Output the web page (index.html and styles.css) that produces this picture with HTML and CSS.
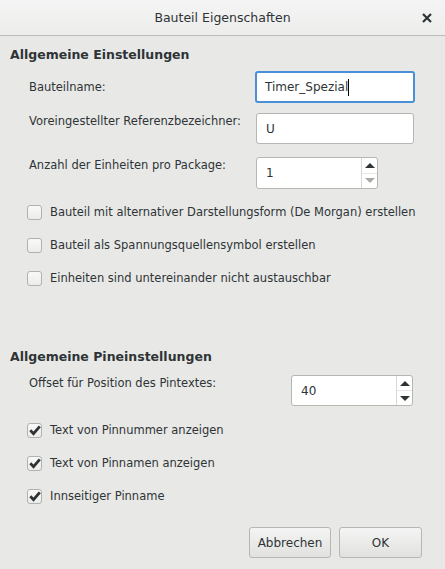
FILE: index.html
```html
<!DOCTYPE html>
<html lang="de">
<head>
<meta charset="utf-8">
<title>Bauteil Eigenschaften</title>
<link rel="stylesheet" href="styles.css">
</head>
<body>
<div class="window">
  <header class="titlebar">
    <span class="title">Bauteil Eigenschaften</span>
    <span class="close">
      <svg width="10" height="10" viewBox="0 0 10 10"><path d="M1 1 L9 9 M9 1 L1 9" stroke="#2e3436" stroke-width="2.2" stroke-linecap="butt"/></svg>
    </span>
  </header>
  <main class="content">
    <h2 class="heading">Allgemeine Einstellungen</h2>
    <div class="row row-name">
      <label class="lbl lbl-center">Bauteilname:</label>
      <div class="entry entry-focus entry-wide">Timer_Spezial<span class="caret"></span></div>
    </div>
    <div class="row row-ref">
      <label class="lbl">Voreingestellter Referenzbezeichner:</label>
      <div class="entry entry-ref">U</div>
    </div>
    <div class="row row-units">
      <label class="lbl">Anzahl der Einheiten pro Package:</label>
      <div class="spin">
        <span class="spin-value">1</span>
        <span class="spin-btns">
          <span class="spin-btn"><span class="arrow-up"></span></span>
          <span class="spin-btn"><span class="arrow-down disabled"></span></span>
        </span>
      </div>
    </div>
    <div class="checks">
      <div class="check"><span class="box"></span><span>Bauteil mit alternativer Darstellungsform (De Morgan) erstellen</span></div>
      <div class="check"><span class="box"></span><span>Bauteil als Spannungsquellensymbol erstellen</span></div>
      <div class="check"><span class="box"></span><span>Einheiten sind untereinander nicht austauschbar</span></div>
    </div>

    <h2 class="heading heading-pin">Allgemeine Pineinstellungen</h2>
    <div class="row row-offset">
      <label class="lbl">Offset für Position des Pintextes:</label>
      <div class="spin spin-offset">
        <span class="spin-value">40</span>
        <span class="spin-btns">
          <span class="spin-btn"><span class="arrow-up"></span></span>
          <span class="spin-btn"><span class="arrow-down"></span></span>
        </span>
      </div>
    </div>
    <div class="checks checks-pin">
      <div class="check"><span class="box checked"><svg width="12" height="11" viewBox="0 0 12 11"><path d="M1.3 5.3 L4.5 8.6 L10.8 1.3" fill="none" stroke="#2e3436" stroke-width="2.8"/></svg></span><span>Text von Pinnummer anzeigen</span></div>
      <div class="check"><span class="box checked"><svg width="12" height="11" viewBox="0 0 12 11"><path d="M1.3 5.3 L4.5 8.6 L10.8 1.3" fill="none" stroke="#2e3436" stroke-width="2.8"/></svg></span><span>Text von Pinnamen anzeigen</span></div>
      <div class="check"><span class="box checked"><svg width="12" height="11" viewBox="0 0 12 11"><path d="M1.3 5.3 L4.5 8.6 L10.8 1.3" fill="none" stroke="#2e3436" stroke-width="2.8"/></svg></span><span>Innseitiger Pinname</span></div>
    </div>

    <div class="actions">
      <button class="btn btn-cancel">Abbrechen</button>
      <button class="btn btn-ok">OK</button>
    </div>
  </main>
</div>
</body>
</html>
```
FILE: styles.css
```css
* { box-sizing: border-box; }
html, body {
  margin: 0;
  padding: 0;
  background: #e8e8e7;
}
body {
  font-family: "DejaVu Sans", sans-serif;
  font-size: 12px;
  color: #2e3436;
}
.window {
  width: 445px;
  height: 569px;
  display: flex;
  flex-direction: column;
  background: #e8e8e7;
}
.titlebar {
  position: relative;
  height: 36px;
  flex: none;
  background: linear-gradient(#f4f4f4, #ededec);
  border-bottom: 1px solid #bcbcb9;
  display: flex;
  align-items: center;
  justify-content: center;
}
.title {
  font-size: 12.5px;
  font-weight: 500;
  color: #2e3436;
}
.close {
  position: absolute;
  right: 13px;
  top: 13px;
  width: 10px;
  height: 10px;
  display: flex;
}
.content {
  flex: 1;
  padding: 0 0 0 10px;
  display: flex;
  flex-direction: column;
}
.heading {
  margin: 11px 0 0 0;
  font-size: 12.5px;
  font-weight: bold;
  height: 16px;
  line-height: 16px;
}
.row {
  display: flex;
  align-items: flex-start;
}
.lbl {
  width: 245px;
  padding-left: 19px;
  line-height: 16px;
  font-size: 11.5px;
  flex: none;
}
.row-name { margin-top: 8px; align-items: center; }
.row-ref { margin-top: 10px; }
.row-units { margin-top: 13px; }
.entry {
  height: 31px;
  background: #fff;
  border: 1px solid #b6b6b3;
  border-radius: 3px;
  padding: 0 0 0 9px;
  display: flex;
  align-items: center;
  font-size: 12px;
}
.entry-wide { width: 160px; }
.entry-focus {
  height: 32px;
  border: 2px solid #4a90d9;
  padding-left: 8px;
}
.entry-ref { width: 158px; margin-left: 1px; }
.caret {
  display: inline-block;
  width: 1px;
  height: 17px;
  background: #000;
}
.spin {
  width: 122px;
  height: 32px;
  margin-left: 1px;
  background: #fff;
  border: 1px solid #b6b6b3;
  border-radius: 3px;
  display: flex;
}
.spin-value {
  flex: 1;
  display: flex;
  align-items: center;
  padding-left: 9px;
}
.spin-btns {
  width: 16px;
  display: flex;
  flex-direction: column;
  border-left: 1px solid #d8d8d6;
}
.spin-btn {
  flex: 1;
  display: flex;
  align-items: center;
  justify-content: center;
}
.spin-btn + .spin-btn { border-top: 1px solid #e6e6e4; }
.arrow-up, .arrow-down {
  width: 0;
  height: 0;
  border-left: 5px solid transparent;
  border-right: 5px solid transparent;
}
.arrow-up { border-bottom: 5px solid #2e3436; }
.arrow-down { border-top: 5px solid #2e3436; }
.arrow-down.disabled { border-top-color: #a9aaa8; }
.checks {
  display: flex;
  flex-direction: column;
  gap: 17px;
  margin-top: 15px;
  padding-left: 17px;
  font-size: 11.5px;
}
.check {
  display: flex;
  align-items: center;
  gap: 8px;
  height: 16px;
}
.box {
  width: 15px;
  height: 15px;
  flex: none;
  border: 1px solid #b1b1ae;
  border-radius: 3px;
  background: linear-gradient(#f9f9f9, #ececeb);
  display: flex;
  align-items: center;
  justify-content: center;
}
.heading-pin { margin-top: 63px; }
.row-offset { margin-top: 10px; }
.row-offset .lbl { width: 281px; }
.spin-offset { margin-left: 0; height: 31px; }
.checks-pin { margin-top: 16px; gap: 17px; }
.actions {
  margin-top: auto;
  margin-bottom: 11px;
  display: flex;
  justify-content: flex-end;
  gap: 8px;
  padding-right: 23px;
}
.btn {
  height: 31px;
  border: 1px solid #b6b6b3;
  border-radius: 3px;
  background: linear-gradient(#f4f4f4, #e1e1df);
  font-family: "DejaVu Sans", sans-serif;
  font-size: 12px;
  color: #2e3436;
  padding: 0;
}
.btn-cancel { width: 82px; }
.btn-ok { width: 83px; }
```
